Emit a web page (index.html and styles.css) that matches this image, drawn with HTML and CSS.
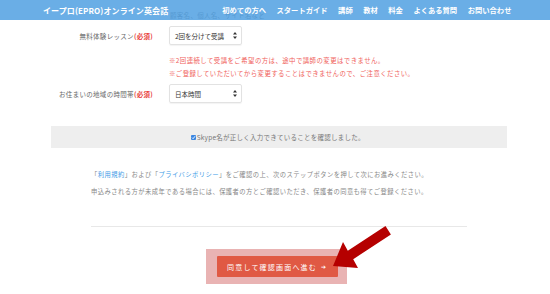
FILE: index.html
```html
<!DOCTYPE html>
<html lang="ja">

<head>
    <meta charset="UTF-8">
    <meta name="viewport" content="width=device-width, initial-scale=1.0">
    <title>イープロ(EPRO)オンライン英会話 - 申込み</title>
    <link rel="stylesheet" href="styles.css">
</head>

<body>
    <header class="site-header">
        <div class="logo">イープロ(EPRO)オンライン英会話</div>
        <nav class="nav">
            <a href="#">初めての方へ</a>
            <a href="#">スタートガイド</a>
            <a href="#">講師</a>
            <a href="#">教材</a>
            <a href="#">料金</a>
            <a href="#">よくある質問</a>
            <a href="#">お問い合わせ</a>
        </nav>
    </header>

    <main class="signup">
        <div class="peek">顧客名、個人名、サイト名など</div>

        <div class="form-row first">
            <label class="label">無料体験レッスン<span class="req">(必須)</span></label>
            <div class="select">
                <span>2回を分けて受講</span>
                <svg class="caret" width="4" height="7" viewBox="0 0 4 7"><path d="M2 0L4 2.6H0Z M2 7L4 4.4H0Z" fill="#333"/></svg>
            </div>
        </div>

        <div class="notes">
            <p>※2回連続して受講をご希望の方は、途中で講師の変更はできません。</p>
            <p>※ご登録していただいてから変更することはできませんので、ご注意ください。</p>
        </div>

        <div class="form-row">
            <label class="label">お住まいの地域の時間帯<span class="req">(必須)</span></label>
            <div class="select">
                <span>日本時間</span>
                <svg class="caret" width="4" height="7" viewBox="0 0 4 7"><path d="M2 0L4 2.6H0Z M2 7L4 4.4H0Z" fill="#333"/></svg>
            </div>
        </div>

        <div class="confirm-band">
            <span class="check">
                <svg width="5" height="5" viewBox="0 0 5 5"><path d="M1 2.6L2.1 3.7L4.1 1.2" stroke="#fff" stroke-width="0.9" fill="none"/></svg>
            </span>Skype名が正しく入力できていることを確認しました。
        </div>

        <div class="terms">
            <p>「<a href="#">利用規約</a>」および「<a href="#">プライバシポリシー</a>」をご確認の上、次のステップボタンを押して次にお進みください。</p>
            <p>申込みされる方が未成年である場合には、保護者の方とご確認いただき、保護者の同意も得てご登録ください。</p>
        </div>

        <hr class="divider">

        <div class="submit-area">
            <div class="highlight">
                <button class="submit">同意して確認画面へ進む<span class="go">➔</span></button>
            </div>
        </div>
    </main>

    <!-- pointer drawn over the page -->
    <svg class="pointer" width="550" height="294" viewBox="0 0 550 294">
        <polygon points="333,266 343,242 347.8,250.8 385.5,226.1 390.9,234.5 353.2,259.2 358,268" fill="#b50000"/>
    </svg>
</body>

</html>
```

FILE: styles.css
```css
body {
    margin: 0;
    font-family: "Noto Sans CJK JP", "Noto Sans", sans-serif;
    color: #666;
    background: #fff;
    overflow: hidden;
}

p {
    margin: 0;
}

.site-header {
    position: absolute;
    top: 0;
    left: 0;
    right: 0;
    height: 20px;
    display: flex;
    align-items: center;
    padding-left: 43px;
    background-color: rgba(69, 154, 224, 0.8);
    color: #fff;
    font-weight: bold;
    z-index: 2;
}

.logo {
    font-size: 8px;
    letter-spacing: 0.1px;
}

.nav {
    display: flex;
    gap: 10.5px;
    margin-left: 54px;
}

.nav a {
    color: #fff;
    text-decoration: none;
    font-size: 7.3px;
}

.peek {
    padding: 10px 0 0 170px;
    height: 10px;
    line-height: 10px;
    font-size: 6.5px;
    color: #999;
    letter-spacing: 0.3px;
}

.form-row {
    display: grid;
    grid-template-columns: 153px 73px;
    column-gap: 16px;
    align-items: center;
}

.form-row.first {
    margin-top: 6px;
}

.label {
    text-align: right;
    font-size: 6.5px;
    letter-spacing: 0.3px;
    color: #666;
}

.req {
    color: #e8413b;
    font-weight: bold;
}

.select {
    height: 19px;
    box-sizing: border-box;
    border: 1px solid #e2e2e2;
    border-radius: 2px;
    box-shadow: 0 1px 1px rgba(0, 0, 0, 0.05);
    display: flex;
    align-items: center;
    justify-content: space-between;
    padding: 0 4px 0 5px;
    font-size: 6.5px;
    color: #333;
}

.notes {
    margin: 8.5px 0 4.5px 169px;
    font-size: 6.4px;
    line-height: 13px;
    letter-spacing: 0.45px;
    color: #f0625c;
}

.confirm-band {
    margin: 23px 43px 0 51px;
    height: 22px;
    background-color: #eeeeee;
    display: flex;
    align-items: center;
    justify-content: center;
    font-size: 6.5px;
    letter-spacing: 0.25px;
    color: #777;
    padding-right: 2px;
}

.check {
    display: inline-flex;
    width: 5px;
    height: 5px;
    background-color: #3b86e0;
    border-radius: 1px;
    margin-right: 0.5px;
}

.terms {
    margin: 17.5px 0 0 91px;
    font-size: 6.3px;
    line-height: 17px;
    letter-spacing: 0.45px;
    color: #888;
}

.terms a {
    color: #3d9be6;
    text-decoration: none;
}

.divider {
    margin: 26.5px 0 0 91px;
    width: 376px;
    border: none;
    border-top: 1px solid #e8e8e8;
}

.submit-area {
    display: flex;
    padding-left: 206px;
    margin-top: 22px;
}

.highlight {
    background-color: #e9b3b3;
    padding: 7px 9px 7px 11px;
}

.submit {
    width: 121px;
    height: 21px;
    border: none;
    border-radius: 1px;
    background-color: #e05944;
    color: #fff;
    font-family: inherit;
    font-size: 7px;
    letter-spacing: 1.2px;
    text-align: left;
    padding: 0 0 0 10px;
    display: flex;
    align-items: center;
}

.go {
    font-size: 6px;
    margin-left: 4px;
}

.pointer {
    position: absolute;
    top: 0;
    left: 0;
    pointer-events: none;
    z-index: 3;
}
```
